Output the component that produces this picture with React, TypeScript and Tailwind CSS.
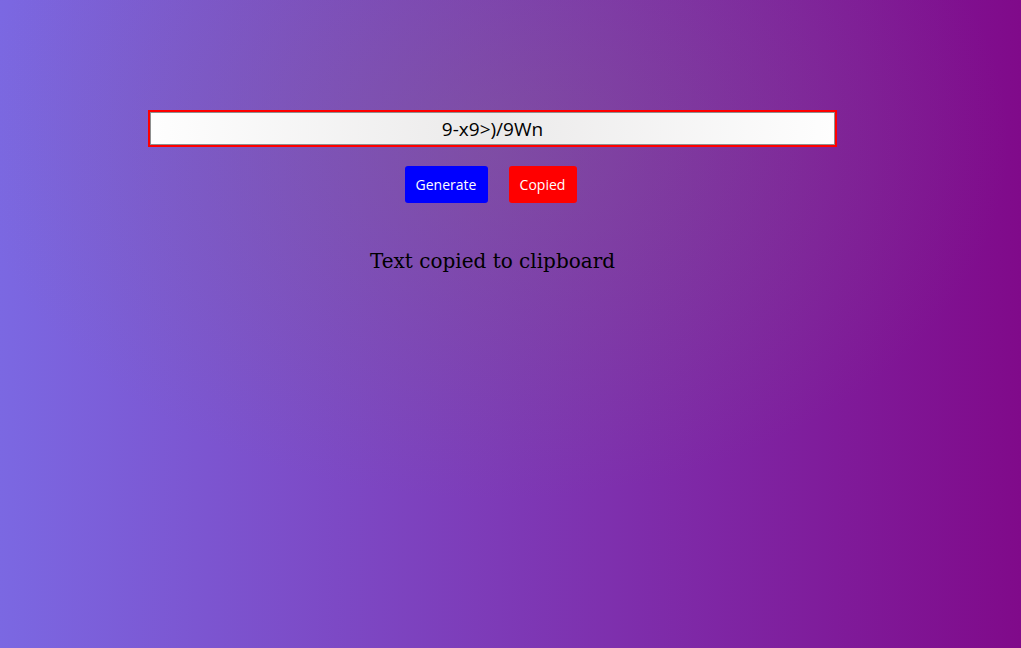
export default function App() {
  return (
    <div className="min-h-[648px] w-full bg-[radial-gradient(ellipse_520px_360px_at_490px_140px,rgba(128,112,128,0.35),rgba(128,112,128,0)),linear-gradient(to_right,#7b68e2,#800a8a)]">
      <div className="flex w-[985px] flex-col items-center pt-[112px]">
        <input
          readOnly
          value="9-x9>)/9Wn"
          className="h-[33px] w-[685px] border border-[#8f8f8f] bg-[radial-gradient(circle_at_center,#ebeaea,#ffffff_360px)] text-center text-[19px] text-black outline-2 outline-[#ff0000] [font-family:'Open_Sans',sans-serif]"
        />
        <div className="mt-[21px] flex gap-[21px] pr-[4px]">
          <button className="h-[37px] w-[83px] rounded-[3px] bg-[#0000ff] text-[14px] text-white [font-family:'Open_Sans',sans-serif]">
            Generate
          </button>
          <button className="h-[37px] w-[68px] rounded-[3px] bg-[#ff0000] text-[14px] text-white [font-family:'Open_Sans',sans-serif]">
            Copied
          </button>
        </div>
        <p className="mt-[45px] text-[20px] leading-[26px] text-black [font-family:'DejaVu_Serif',serif]">
          Text copied to clipboard
        </p>
      </div>
    </div>
  );
}
